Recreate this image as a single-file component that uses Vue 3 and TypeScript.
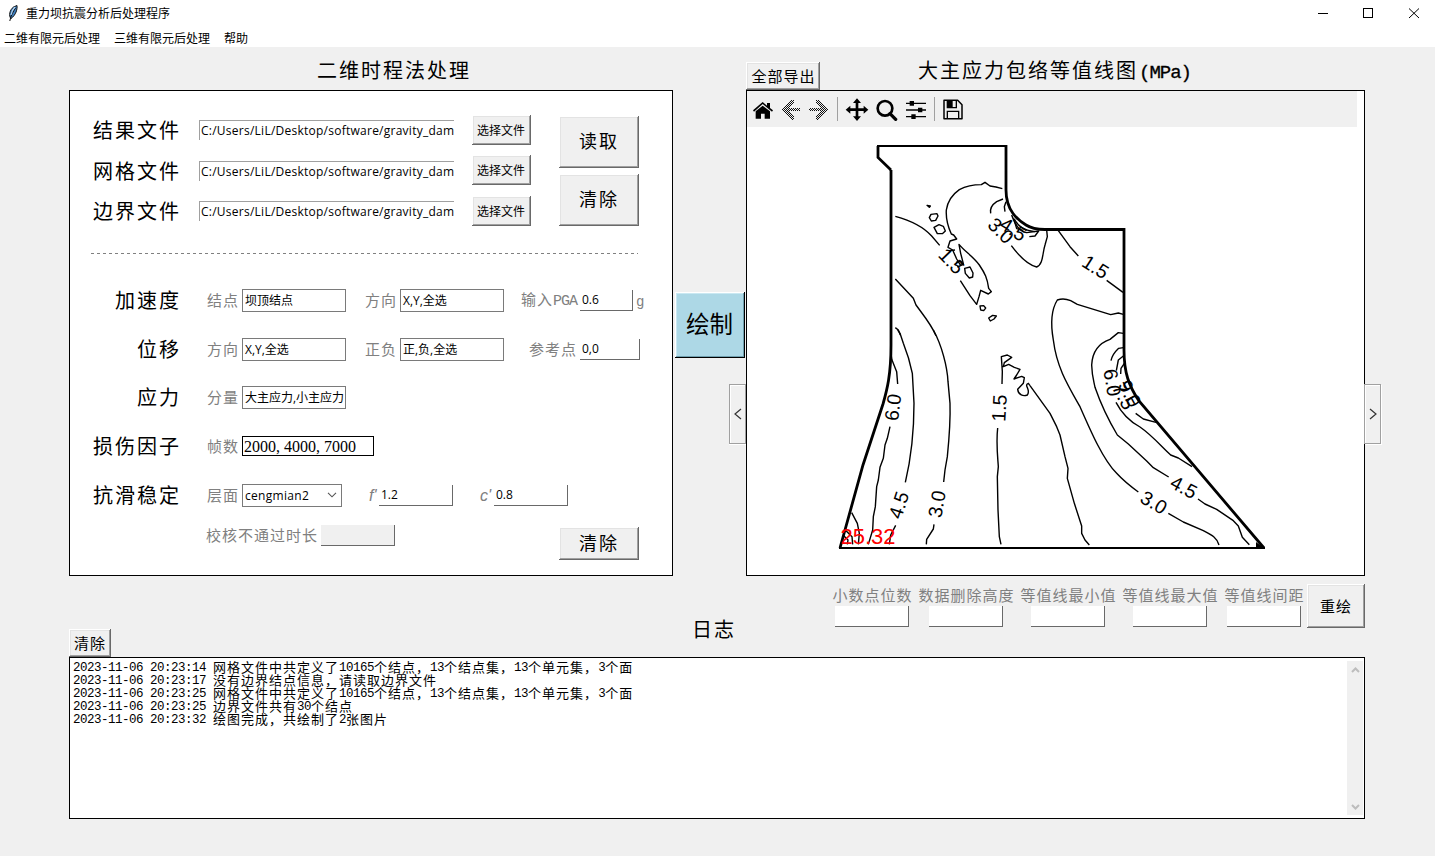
<script setup lang="ts">
interface Field {
  label: string
  value: string
  kind: 'box' | 'plain' | 'song' | 'select' | 'readonly'
  width: number
  labelWidth: number
  gap: number
  math?: boolean
  suffix?: string
}
interface Row { name: string; cls: string; fields: Field[] }
interface Mark { t: string; x: number; y: number; r: number }

const menus: string[] = ['二维有限元后处理', '三维有限元后处理', '帮助']
const files: string[] = ['结果文件', '网格文件', '边界文件']
const filePath = 'C:/Users/LiL/Desktop/software/gravity_dam'

const rows: Row[] = [
  { name: '加速度', cls: 'r1', fields: [
    { label: '结点', value: '坝顶结点', kind: 'box', width: 104, labelWidth: 32, gap: 26 },
    { label: '方向', value: 'X,Y,全选', kind: 'box', width: 104, labelWidth: 32, gap: 19 },
    { label: '输入PGA', value: '0.6', kind: 'plain', width: 53, labelWidth: 56, gap: 17, suffix: 'g' },
  ] },
  { name: '位移', cls: 'r2', fields: [
    { label: '方向', value: 'X,Y,全选', kind: 'box', width: 104, labelWidth: 32, gap: 26 },
    { label: '正负', value: '正,负,全选', kind: 'box', width: 104, labelWidth: 32, gap: 19 },
    { label: '参考点', value: '0,0', kind: 'plain', width: 60, labelWidth: 48, gap: 25 },
  ] },
  { name: '应力', cls: 'r3', fields: [
    { label: '分量', value: '大主应力,小主应力', kind: 'box', width: 104, labelWidth: 32, gap: 26 },
  ] },
  { name: '损伤因子', cls: 'r4', fields: [
    { label: '帧数', value: '2000, 4000, 7000', kind: 'song', width: 132, labelWidth: 32, gap: 26 },
  ] },
  { name: '抗滑稳定', cls: 'r5', fields: [
    { label: '层面', value: 'cengmian2', kind: 'select', width: 100, labelWidth: 32, gap: 26 },
    { label: "f'", value: '1.2', kind: 'plain', width: 74, labelWidth: 9, gap: 27, math: true },
    { label: "c'", value: '0.8', kind: 'plain', width: 74, labelWidth: 13, gap: 27, math: true },
  ] },
  { name: '', cls: 'r6', fields: [
    { label: '校核不通过时长', value: '', kind: 'readonly', width: 74, labelWidth: 112, gap: 25 },
  ] },
]

const options = [
  { label: '小数点位数', cls: 'o5' },
  { label: '数据删除高度', cls: 'o6' },
  { label: '等值线最小值', cls: 'o6' },
  { label: '等值线最大值', cls: 'o6' },
  { label: '等值线间距', cls: 'o5' },
]

const logs: string[] = [
  '2023-11-06 20:23:14 网格文件中共定义了10165个结点，13个结点集，13个单元集，3个面',
  '2023-11-06 20:23:17 没有边界结点信息，请读取边界文件',
  '2023-11-06 20:23:25 网格文件中共定义了10165个结点，13个结点集，13个单元集，3个面',
  '2023-11-06 20:23:25 边界文件共有30个结点',
  '2023-11-06 20:23:32 绘图完成，共绘制了2张图片',
]
const runs = (s: string): { text: string; wide: boolean }[] =>
  (s.match(/[\x00-\x7f]+|[^\x00-\x7f]+/g) ?? []).map((text) => ({ text, wide: text.charCodeAt(0) > 127 }))

const marks: Mark[] = [
  { t: '6.0', x: 892.7, y: 407.3, r: -83 },
  { t: '4.5', x: 898.6, y: 505, r: -72 },
  { t: '3.0', x: 936.7, y: 504, r: -80 },
  { t: '1.5', x: 999, y: 408, r: -87 },
  { t: '4.5', x: 1184, y: 487, r: 28 },
  { t: '3.0', x: 1154, y: 502.3, r: 30 },
  { t: '6.0', x: 1112.5, y: 382.5, r: 80 },
  { t: '7.5', x: 1124, y: 396, r: 62 },
  { t: '9.0', x: 1130, y: 393.5, r: 62 },
  { t: '1.5', x: 951.7, y: 261, r: 46 },
  { t: '3.0', x: 1001, y: 230.5, r: 44 },
  { t: '4.5', x: 1013.5, y: 229, r: 32 },
  { t: '1.5', x: 1095.6, y: 266.7, r: 32 },
]

const upperLines: string[] = [
  'M427 161 L408 156 L390 153 L375 142 L364 149 C340 149 315 155 298 164 C275 180 262 205 259 225 C257 255 264 275 274 297 L281 300 L290 312 L270 318 L264 337 L278 345 L290 372 L300 388 L310 386 L302 355 L297 328 C315 350 340 365 358 390 C375 415 382 430 386 460 L394 470 L385 477 L362 466 L357 485 L350 508 L330 482 L301 437',
  'M106 244 C150 256 190 275 215 303 L239 331',
  'M201 211 L211 213 L208 217 Z',
  'M213 238 L231 236 L234 243 L227 256 L214 258 L208 248 Z',
  'M222 277 L237 269 L250 274 L256 288 L247 296 L232 296 Z',
  'M314 400 L330 396 L339 414 L338 426 L328 429 L316 415 Z',
  'M360 513 L371 512 L377 519 L371 527 L362 525 Z',
  'M386 549 L398 541 L409 543 L402 552 L391 558 Z',
  'M106 432 L160 490 L168 510 C190 540 215 570 228 602',
  'M106 578 L115 585 L121 600',
  'M429 192 L410 200 C395 210 389 220 392 235',
  'M438 200 L433 215 L435 230',
  'M454 332 C475 360 505 390 530 396 C550 388 547 355 555 330 L562 305 L560 285',
  'M455 240 C465 270 480 290 500 293 L536 288 L525 303 L508 305',
  'M463 252 C475 275 490 286 525 290',
  'M461 250 L470 281 L490 286',
  'M268 347 L285 345 M288 382 L302 378 L310 388 L292 396',
  'M595 287 L630 335 L655 363',
  'M740 436 L789 472',
]
const heelLines: string[] = [
  'M183 72 L186 90 L200 125 L203 162',
  'M180 290 L172 325 L165 345 L160 385 L150 412 L145 450 L140 470 L136 530 L130 560 L128 600 L115 643',
  'M203 0 L210 10 L220 40 C232 70 242 105 247 130 L252 220 C252 310 242 390 226 457',
  'M197 586 L182 615 L178 643',
  'M310 0 C335 45 352 110 354 155 L360 220 C362 280 356 340 352 380 L345 420 L341 456',
  'M312 583 L310 597 L290 628 L289 643',
  'M516 162 L517 125 L514 80 L532 75 L545 82 L523 98 L520 110 L536 103 L553 112 L570 118 L560 135 L552 147 L575 139 L583 143 L580 160 L563 178 C565 195 580 200 592 195 C604 180 580 165 595 160 L600 167',
  'M503 294 C498 340 503 380 505 410 L502 440 L504 540 L508 620 L513 643',
  'M65 548 L82 580 L88 610 L85 643',
  'M48 602 L66 620 L68 643 M42 618 L54 630 L52 643',
]
const toeLines: string[] = [
  'M0 317 L60 400 L80 440 L90 465 L105 530 L114 565 L112 595 L133 670 L155 738 L155 760 L165 780 L178 795',
  'M280 103 L265 99 L242 104 L142 73 L122 62 C108 56 93 56 82 60 C60 95 63 140 70 180 C80 260 110 310 150 380 C185 460 220 540 260 580 C280 602 300 618 325 636',
  'M415 700 L460 726 L520 752 C545 765 560 772 567 795',
  'M280 160 L265 158 L240 178 C205 190 187 215 185 255 C186 290 192 305 195 322 C215 380 235 420 262 465 L295 492 L350 543 L370 563 L416 591',
  'M504 657 L525 672 L560 688 L610 722 L625 738 L637 772 L658 794',
  'M280 203 L266 205 C252 218 246 228 243 242',
  'M258 367 C275 400 295 422 330 441 C365 465 395 500 422 525 L445 534 L486 560',
  'M280 228 L265 240 L259 272',
  'M283 250 L273 265 L272 282',
  'M317 400 L340 417 L378 427',
]
</script>

<template>
  <div class="window">
    <header class="titlebar">
      <svg class="feather" width="12" height="18" viewBox="0 0 12 18">
        <path d="M10 1.500 C10.500 5 9 11 4 14.500 C1.500 12 2.500 6 6.500 3Z" fill="#3d7fc0" stroke="#111" stroke-width="1" />
        <path d="M8.500 4 C6 8 4 11 2.800 17" fill="none" stroke="#111" stroke-width="1" />
        <path d="M8 3 C5.500 5.500 4.500 8 4 11" fill="none" stroke="#b5d6f2" stroke-width="1.200" />
      </svg>
      <span class="title">重力坝抗震分析后处理程序</span>
      <svg class="controls" width="117" height="27" viewBox="0 0 117 27" fill="none" stroke="#000" stroke-width="1">
        <path d="M0 13.500H10M45.500 8.500H54.500V17.500H45.500Z" shape-rendering="crispEdges" />
        <path d="M91 8.500L101 18M101 8.500L91 18" />
      </svg>
    </header>
    <nav class="menubar"><span v-for="m in menus" :key="m">{{ m }}</span></nav>

    <main class="work">
      <section class="left">
        <h2>二维时程法处理</h2>
        <div class="panel form">
          <div class="files">
            <div class="file-list">
              <div v-for="f in files" :key="f" class="file">
                <span class="name">{{ f }}</span>
                <span class="path"><span>{{ filePath }}</span></span>
                <button class="btn small">选择文件</button>
              </div>
            </div>
            <div class="file-actions">
              <button class="btn big">读取</button>
              <button class="btn big">清除</button>
            </div>
          </div>
          <svg class="dash" width="547" height="1" viewBox="0 0 547 1">
            <path d="M0 .5H547" stroke="#808080" stroke-dasharray="3 3" />
          </svg>
          <div v-for="r in rows" :key="r.cls" class="row" :class="r.cls">
            <span class="name">{{ r.name }}</span>
            <template v-for="(f, i) in r.fields" :key="i">
              <span class="lab" :class="{ math: f.math }" :style="{ width: f.labelWidth + 'px', marginLeft: f.gap + 'px' }">
                <template v-if="f.label === '输入PGA'">输入<span class="latin">PGA</span></template>
                <template v-else>{{ f.label }}</template>
              </span>
              <span class="input" :class="f.kind" :style="{ width: f.width + 'px' }">
                <span>{{ f.value }}</span>
                <svg v-if="f.kind === 'select'" width="10" height="6" viewBox="0 0 10 6">
                  <path d="M1 .8L5 4.800L9 .8" fill="none" stroke="#555" stroke-width="1.100" />
                </svg>
              </span>
              <span v-if="f.suffix" class="unit">{{ f.suffix }}</span>
            </template>
            <button v-if="r.cls === 'r6'" class="btn reset">清除</button>
          </div>
        </div>
      </section>

      <aside class="middle">
        <button class="btn draw">绘制</button>
        <button class="pager prev">
          <svg width="8" height="12" viewBox="0 0 8 12"><path d="M7 1L1 6L7 11" /></svg>
        </button>
      </aside>

      <section class="right">
        <div class="head">
          <button class="btn export">全部导出</button>
          <h2>大主应力包络等值线图<span class="mpa">(MPa)</span></h2>
        </div>
        <div class="panel figure">
          <div class="toolbar">
            <svg class="home" width="22" height="20" viewBox="36 150 66 60">
              <path d="M39 181L68 156L81 167V159H90V174L99 181L96 185L68 162L42 185Z" />
              <path d="M47 184L68 167L90 184V206H74V191H63V206H47Z" />
            </svg>
            <svg class="back" width="20" height="20" viewBox="126 150 60 60">
              <defs>
                <pattern id="dither" width="6" height="6" patternUnits="userSpaceOnUse">
                  <path d="M0 0H3V3H0ZM3 3H6V6H3Z" fill="#111" />
                </pattern>
              </defs>
              <path d="M126 179L156 150H164V159L148 174H184V184H148L164 200V209H156Z" fill="url(#dither)" shape-rendering="crispEdges" />
            </svg>
            <svg class="forward" width="20" height="20" viewBox="204 150 60 60">
              <path d="M264 179L234 150H227V159L242 174H206V184H242L227 200V209H234Z" fill="url(#dither)" shape-rendering="crispEdges" />
            </svg>
            <i class="sep" />
            <svg class="pan" width="24" height="24" viewBox="315 144 72 72">
              <path d="M351 145L363 159H355V175H371V167L385 179L371 191V183H355V199H363L351 213L339 199H347V183H331V191L317 179L331 167V175H347V159H339Z" />
            </svg>
            <svg class="lens" width="22" height="22" viewBox="408 145 66 66">
              <circle cx="435" cy="173" r="22" fill="none" stroke="#000" stroke-width="8" />
              <path d="M450 189L467 206" stroke="#000" stroke-width="10" stroke-linecap="round" />
            </svg>
            <svg class="sliders" width="20" height="20" viewBox="498 150 60 60">
              <path d="M498 158H558V162H498ZM498 178H558V182H498ZM498 198H558V202H498Z" />
              <path d="M509 153H522V167H509ZM534 173H547V187H534ZM514 193H527V207H514Z" />
            </svg>
            <i class="sep" />
            <svg class="save" width="22" height="22" viewBox="606 147 66 66">
              <path d="M612 151H653L666 164V206H612Z" fill="none" stroke="#000" stroke-width="4.500" stroke-linejoin="round" />
              <path d="M622 151V173H649V151M622 206V184H656V206" fill="none" stroke="#000" stroke-width="4" />
              <path d="M622 151H638V173H622Z" />
            </svg>
          </div>
          <svg class="plot" width="617" height="448" viewBox="747 127 617 448">
            <g fill="none" stroke="#000">
              <path d="M891 170V345C891 375 887 390 883 404L863 465L840 548" stroke-width="2.800" />
              <path d="M878 146V157.500L891 170M1006 145V190C1006 211 1018 220 1026 225C1032 229 1037 229.500 1045 229.500H1124V350C1124 373 1129 386 1139 401L1264 548" stroke-width="2.800" />
              <path d="M877 146H1007M839 548H1265" stroke-width="2" shape-rendering="crispEdges" />
            </g>
            <g class="iso">
              <g transform="translate(860 135) scale(.33333)"><path v-for="(d, i) in upperLines" :key="i" :d="d" /></g>
              <g transform="translate(830 330) scale(.33333)"><path v-for="(d, i) in heelLines" :key="i" :d="d" /></g>
              <g transform="translate(1030 280) scale(.33333)"><path v-for="(d, i) in toeLines" :key="i" :d="d" /></g>
            </g>
            <path d="M1256 542L1264 548H1256Z" />
            <text
              v-for="(m, i) in marks" :key="i" class="mark" text-anchor="middle"
              :transform="`translate(${m.x} ${m.y}) rotate(${m.r})`" y="7"
            >{{ m.t }}</text>
            <text class="peak" x="840.500" y="544">25.32</text>
          </svg>
        </div>
        <div class="options">
          <label v-for="o in options" :key="o.label" :class="o.cls">
            <span class="lab">{{ o.label }}</span>
            <i class="entry" />
          </label>
          <button class="btn redraw">重绘</button>
        </div>
      </section>

      <aside class="edge">
        <button class="pager next">
          <svg width="8" height="12" viewBox="0 0 8 12"><path d="M1 1L7 6L1 11" /></svg>
        </button>
      </aside>
    </main>

    <section class="log">
      <div class="log-head">
        <button class="btn clear">清除</button>
        <h2>日志</h2>
      </div>
      <div class="panel log-box">
        <div class="lines">
          <p v-for="(l, i) in logs" :key="i"><span v-for="(s, j) in runs(l)" :key="j" :class="s.wide ? 'wide' : 'narrow'">{{ s.text }}</span></p>
        </div>
        <div class="scroll">
          <svg width="9" height="6" viewBox="0 0 9 6"><path d="M1 5L4.500 1.500L8 5" /></svg>
          <svg width="9" height="6" viewBox="0 0 9 6"><path d="M1 1L4.500 4.500L8 1" /></svg>
        </div>
      </div>
    </section>
  </div>
</template>

<style>
html, body { margin: 0; overflow: hidden; background: #f0f0f0; }
</style>

<style scoped>
* { box-sizing: border-box; }
.window {
  width: 1435px; height: 856px; display: flex; flex-direction: column;
  background: #f0f0f0; color: #000; white-space: nowrap; overflow: hidden;
  font-family: "Liberation Sans", "Noto Sans CJK SC", sans-serif; font-size: 12px;
}
svg { display: block; flex: none; }
h2, p { margin: 0; font-weight: 400; }
h2 { font-size: 20px; letter-spacing: 2px; line-height: 30px; }
button { font: inherit; color: inherit; padding: 0; margin: 0; border: 0; flex: none; }

.titlebar { flex: none; height: 27px; background: #fff; display: flex; align-items: center; padding-left: 7px; }
.title { margin-left: 7px; line-height: 18px; padding-top: 1px; }
.feather { margin-top: -2px; }
.controls { margin-left: auto; }
.menubar { flex: none; height: 20px; background: #fff; display: flex; gap: 14px; padding-left: 4px; line-height: 24px; }

.work { flex: none; height: 581px; display: flex; padding-left: 69px; }
.panel { background: #fff; border: 1px solid #000; }
.left { width: 604px; }
.left h2 { height: 43px; padding-top: 9px; padding-left: 248px; }
.form { height: 486px; }
.files { display: flex; height: 162px; padding-left: 23px; }
.file-list { padding-top: 20px; }
.file { display: flex; align-items: center; height: 40.500px; }
.name { font-size: 20px; letter-spacing: 2px; line-height: 30px; width: 106px; }
.path {
  width: 255px; height: 20px; margin-top: -2px; margin-right: 18px; padding-left: 1px; overflow: hidden;
  border-top: 1px solid #a0a0a0; border-left: 1px solid #a0a0a0;
  line-height: 19px; letter-spacing: .25px; font-family: "Open Sans", "Noto Sans", sans-serif;
}
.file .name { margin-top: 0; }
.file .btn { margin-top: -3px; }
.btn {
  background: #f0f0f0; text-align: center;
  box-shadow: inset -1px -1px #696969, inset 1px 1px #fff, inset -2px -2px #a0a0a0, inset 2px 2px #e3e3e3;
}
.small { width: 59px; height: 30px; padding: 0 1px 1px 0; }
.file-actions { margin-left: 28px; padding-top: 25px; display: flex; flex-direction: column; gap: 6px; }
.big { width: 80px; height: 52px; font-size: 18px; letter-spacing: 2px; padding-bottom: 4px; }
.dash { margin-left: 21px; }

.row { display: flex; align-items: center; height: 30px; }
.row .name { width: 111px; text-align: right; margin-top: 2px; }
.r1 { margin-top: 31px; }
.r2 { margin-top: 19px; }
.r3 { margin-top: 18px; }
.r4 { margin-top: 19px; }
.r5 { margin-top: 19px; }
.r6 { margin-top: 10px; }
.lab { color: #808080; font-size: 15px; letter-spacing: 1px; line-height: 20px; flex: none; }
.row .lab { margin-right: 3px; margin-top: 1px; }
.row .lab.math { font-style: italic; font-size: 16px; letter-spacing: 0; margin-right: 1px; }
.latin { font-family: "Liberation Mono", monospace; font-size: 15px; letter-spacing: -1px; }
.input { display: flex; align-items: center; flex: none; height: 23px; font-family: "Open Sans", "Noto Sans CJK SC", sans-serif; }
.box, .select { border: 1px solid #7a7a7a; padding-left: 2px; }
.select { justify-content: space-between; padding-right: 4px; letter-spacing: .3px; }
.plain { height: 21px; border-right: 1px solid #696969; border-bottom: 1px solid #696969; padding-left: 2px; }
.song { height: 20px; border: 1px solid #000; padding: 1px 0 0 1px; font-family: "Liberation Serif", serif; font-size: 16px; }
.readonly { height: 21px; background: #f0f0f0; border-right: 1px solid #696969; border-bottom: 1px solid #696969; }
.unit { margin-left: 3px; margin-top: 3px; color: #808080; font-family: "Liberation Mono", monospace; font-size: 14px; }
.reset { width: 80px; height: 33px; font-size: 18px; letter-spacing: 2px; margin-left: 164px; margin-top: 16px; padding-bottom: 2px; }

.middle { width: 73px; display: flex; flex-direction: column; align-items: flex-end; padding-top: 245px; }
.draw {
  width: 70px; height: 66px; margin-right: 1px; padding: 0 1px 4px 0; background: #add8e6; font-size: 23.500px;
  box-shadow: inset -1px -1px #000, inset 1px 1px #fff, inset -2px -2px #6f9fae, inset 2px 2px #c9e8f2;
}
.pager {
  width: 17px; height: 60px; display: flex; align-items: center; justify-content: center;
  background: #f0f0f0; border: 1px solid #a0a0a0; box-shadow: inset 1px 1px #fff, 0 1px #fff; position: relative;
}
.pager path { fill: none; stroke: #333; stroke-width: 1.200; }
.prev { margin-top: 26px; }
.next { margin-left: -1px; box-shadow: inset 1px 1px #fff, 1px 1px #fff; }
.right { width: 619px; }
.head { height: 43px; display: flex; }
.export { width: 74px; height: 28px; margin-top: 15px; font-size: 15px; letter-spacing: 1px; padding: 0 0 1px 1px; }
.head h2 { margin: 9px 0 0 98px; }
.mpa { font-family: "Liberation Mono", monospace; font-size: 19px; letter-spacing: -1px; margin-left: 1px; -webkit-text-stroke: .3px #000; }
.figure { height: 486px; }
.toolbar { width: 610px; height: 36px; background: #f0f0f0; display: flex; align-items: center; padding-top: 1px; }
.toolbar svg { margin-top: 1px; }
.sep { width: 1px; height: 24px; background: #a0a0a0; }
.toolbar .sep { margin-top: -1px; }
.home { margin-left: 5px; }
.back { margin-left: 7px; }
.forward { margin-left: 7px; }
.forward + .sep { margin-left: 9px; }
.pan { margin-left: 7px; }
.lens { margin-left: 7px; }
.sliders { margin-left: 8px; }
.sliders + .sep { margin-left: 8px; }
.save { margin-left: 7px; }
.iso path { fill: none; stroke: #000; stroke-width: 4.200; stroke-linejoin: round; }
.mark { font-size: 19.500px; }
.peak { font-size: 22px; fill: #f00; }
.options { display: flex; padding: 8px 0 0 87px; }
.options label { display: flex; flex-direction: column; margin-right: 6px; padding-top: 2px; }
.options .lab { margin-left: -.5px; }
.o5 { width: 80px; }
.o6 { width: 96px; }
.entry { width: 74px; height: 21px; background: #fff; border-right: 1px solid #696969; border-bottom: 1px solid #696969; }
.o5 .entry { margin-left: 2px; }
.o6 .entry { margin-left: 10px; }
.redraw { width: 58px; height: 44px; font-size: 15px; letter-spacing: 1px; margin-left: -4px; padding-bottom: 2px; }
.edge { width: 17px; padding-top: 337px; }

.log { padding-left: 69px; }
.log-head { display: flex; height: 29px; }
.clear { width: 42px; height: 28px; margin-top: 1px; font-size: 15px; letter-spacing: 1px; padding-bottom: 1px; }
.log-head h2 { margin: -13px 0 0 581px; }
.log-box { width: 1296px; height: 162px; display: flex; padding: 3px 1px 3px 3px; justify-content: space-between; }
.lines p { height: 13px; line-height: 13px; display: flex; }
.narrow { white-space: pre; padding-top: 1px; font-family: "Liberation Mono", monospace; font-size: 12.500px; letter-spacing: -.501px; }
.wide { font-size: 13px; letter-spacing: 1px; }
.scroll { width: 16px; background: #f0f0f0; display: flex; flex-direction: column; align-items: center; justify-content: space-between; padding: 6px 0 5px; }
.scroll path { fill: none; stroke: #bdbdbd; stroke-width: 2; }
</style>
